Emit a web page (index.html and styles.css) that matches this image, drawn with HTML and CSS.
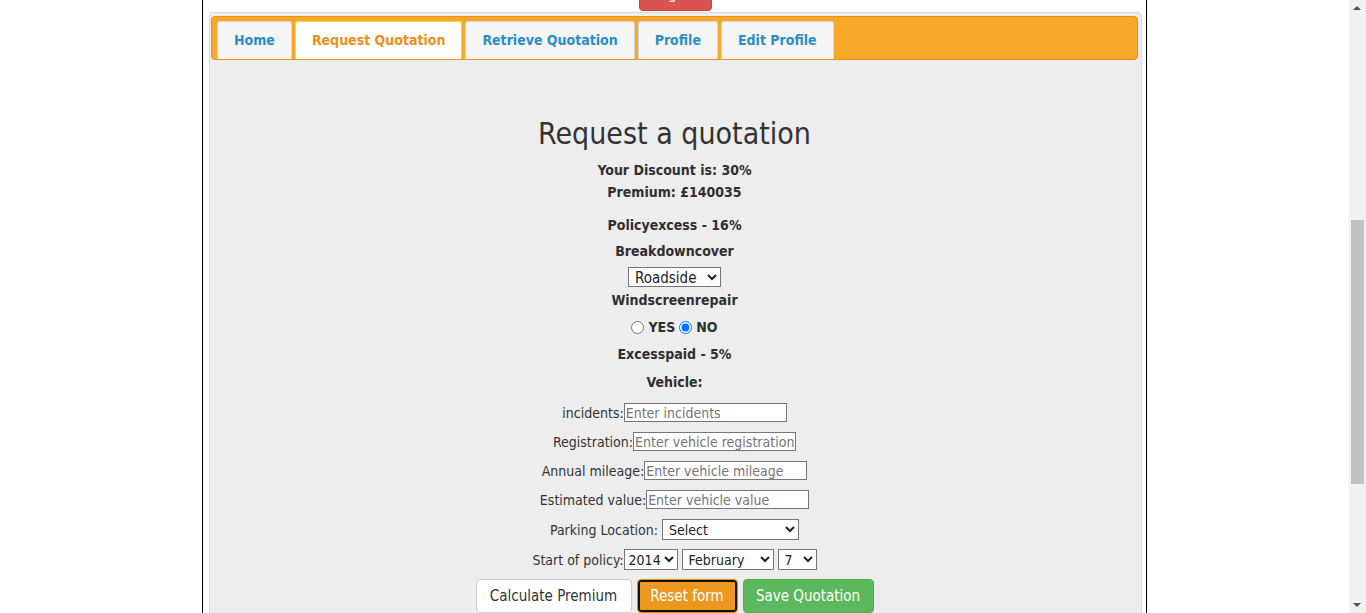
FILE: index.html
```html
<!DOCTYPE html>
<html lang="en">
<head>
<meta charset="utf-8">
<title>Request a quotation</title>
<link rel="stylesheet" href="styles.css">
</head>
<body>
<div class="page">
  <header class="top">
    <h2 class="site-title">Insurance Broker</h2>
    <p class="welcome">Welcome back</p>
  </header>
  <div class="logout-wrap">
    <a class="btn btn-danger logout" href="#">Logout</a>
  </div>
  <div class="panel">
    <ul class="tabs">
      <li class="tab"><a href="#">Home</a></li>
      <li class="tab active"><a href="#">Request Quotation</a></li>
      <li class="tab"><a href="#">Retrieve Quotation</a></li>
      <li class="tab"><a href="#">Profile</a></li>
      <li class="tab"><a href="#">Edit Profile</a></li>
    </ul>
    <section class="quote">
      <h1 class="title">Request a quotation</h1>
      <p class="line l-discount">Your Discount is: 30%</p>
      <p class="line l-premium">Premium: £140035</p>
      <p class="line l-policy">Policyexcess - 16%</p>
      <p class="line l-breakdown">Breakdowncover</p>
      <div class="sel-row">
        <select class="sel sel-breakdown"><option>Roadside</option><option>At home</option><option>European</option></select>
      </div>
      <p class="line l-wind">Windscreenrepair</p>
      <div class="radio-row line">
        <label><input type="radio" name="ws"> YES</label>
        <label><input type="radio" name="ws" checked> NO</label>
      </div>
      <p class="line l-excess">Excesspaid - 5%</p>
      <p class="line l-vehicle">Vehicle:</p>
      <div class="row first"><label>incidents:</label><input class="txt" type="text" placeholder="Enter incidents"></div>
      <div class="row"><label>Registration:</label><input class="txt" type="text" placeholder="Enter vehicle registration"></div>
      <div class="row"><label>Annual mileage:</label><input class="txt" type="text" placeholder="Enter vehicle mileage"></div>
      <div class="row"><label>Estimated value:</label><input class="txt" type="text" placeholder="Enter vehicle value"></div>
      <div class="row row-sel"><label>Parking Location:&nbsp;</label><select class="sel sel-park"><option>Select</option><option>Garage</option><option>Driveway</option><option>Street</option></select></div>
      <div class="row row-sel start"><label>Start of policy:</label>
        <select class="sel sel-year"><option>2014</option></select>
        <select class="sel sel-month"><option>February</option></select>
        <select class="sel sel-day"><option>7</option></select>
      </div>
      <div class="buttons">
        <button class="btn btn-default" type="button">Calculate Premium</button>
        <button class="btn btn-warning focused" type="reset">Reset form</button>
        <button class="btn btn-success" type="button">Save Quotation</button>
      </div>
    </section>
  </div>
</div>
<div class="fake-scroll" aria-hidden="true">
  <span class="arrow up"></span>
  <span class="thumb"></span>
  <span class="arrow down"></span>
</div>
<script src="script.js"></script>
</body>
</html>
```

FILE: styles.css
```css
html, body {
  margin: 0;
  padding: 0;
}
body {
  margin-right: 17px;
  font-family: "DejaVu Sans Condensed", "DejaVu Sans", sans-serif;
  color: #333;
  background: #fff;
}
.page {
  box-sizing: border-box;
  width: 945px;
  margin: 0 auto;
  border-left: 1px solid #000;
  border-right: 1px solid #000;
  padding: 0 4px 20px 6px;
}
.top {
  height: 448px;
  display: flex;
  flex-direction: column;
  align-items: center;
  justify-content: center;
}
.site-title {
  margin: 0;
  font-size: 28px;
  font-weight: normal;
}
.welcome {
  margin: 8px 0 0;
  font-size: 15px;
}
.logout-wrap {
  display: flex;
  justify-content: center;
}
.btn {
  box-sizing: border-box;
  display: inline-flex;
  align-items: center;
  justify-content: center;
  height: 34px;
  padding: 0 12px;
  border: 1px solid transparent;
  border-radius: 4px;
  font-family: inherit;
  font-size: 15px;
  text-decoration: none;
  cursor: pointer;
}
.btn-danger {
  background: #d9534f;
  border-color: #d43f3a;
  color: #fff;
}
.logout {
  width: 73px;
}
.panel {
  margin-top: 1px;
  border: 1px solid #dadada;
  border-radius: 4px;
  background: #ededed;
  padding: 3px 3px 240px 1px;
}
.tabs {
  list-style: none;
  margin: 0;
  padding: 4px 5px 0;
  display: flex;
  gap: 3px;
  background: #f6a82b;
  border: 1px solid #e8910e;
  border-radius: 4px;
}
.tab {
  border: 1px solid #d6d6d6;
  border-bottom: 0;
  border-radius: 3px 3px 0 0;
  background: #f5f5f5;
}
.tab a {
  display: block;
  padding: 0 16px;
  line-height: 37px;
  font-size: 14px;
  font-weight: bold;
  color: #2a8ec4;
  text-decoration: none;
}
.tab.active {
  background: #fff;
  border-color: #f8cf52;
}
.tab.active a {
  color: #eb8f1a;
}
.quote {
  display: flex;
  flex-direction: column;
  align-items: center;
  text-align: center;
}
.title {
  margin: 56px 0 8px;
  font-size: 30px;
  line-height: 36px;
  font-weight: normal;
  color: #333;
}
.line {
  margin: 0;
  font-size: 14px;
  line-height: 21px;
  font-weight: bold;
  color: #2f2f2f;
}
.l-premium { margin-top: 1px; }
.l-policy { margin-top: 12px; }
.l-breakdown { margin-top: 5px; }
.sel-row {
  margin-top: 5px;
  display: flex;
}
.l-wind { margin-top: 3px; }
.sel {
  box-sizing: border-box;
  height: 21px;
  border: 1px solid #767676;
  border-radius: 0;
  background: #fff;
  color: #222;
  font-family: inherit;
  font-size: 14px;
  padding: 0 2px;
}
.sel-breakdown {
  width: 93px;
  height: 20px;
  font-size: 15px;
}
.radio-row {
  margin-top: 6px;
  display: flex;
  align-items: center;
  gap: 4px;
}
.radio-row label {
  display: flex;
  align-items: center;
  gap: 4px;
}
.radio-row input {
  margin: 0;
  width: 13px;
  height: 13px;
}
.l-excess { margin-top: 6px; }
.l-vehicle { margin-top: 7px; }
.row {
  margin-top: 10px;
  display: flex;
  align-items: center;
  font-size: 14px;
  color: #333;
}
.row-sel.start { margin-top: 9px; }
.txt {
  box-sizing: border-box;
  width: 163px;
  height: 19px;
  border: 1px solid #767676;
  padding: 0 1px;
  font-family: inherit;
  font-size: 14px;
  color: #222;
  background: #fff;
}
.txt::placeholder {
  color: #757575;
}
.sel-park { width: 137px; }
.start { gap: 4px; }
.start label { margin-right: -4px; }
.sel-year { width: 54px; padding: 0; }
.sel-month { width: 92px; }
.sel-day { width: 39px; }
.buttons {
  margin-top: 9px;
  display: flex;
  gap: 5px;
}
.btn-default {
  background: #fff;
  border-color: #ccc;
  color: #333;
  width: 156px;
}
.btn-warning {
  background: #ec971f;
  border-color: #d58512;
  color: #fff;
  width: 101px;
}
.btn-warning.focused {
  border-color: #e08e0b;
  box-shadow: inset 0 0 0 2px #111;
}
.btn-success {
  background: #5cb85c;
  border-color: #4cae4c;
  color: #fff;
  width: 131px;
}
.fake-scroll {
  position: fixed;
  top: 0;
  right: 0;
  width: 17px;
  height: 100%;
  background: #f1f1f1;
}
.fake-scroll .thumb {
  position: absolute;
  left: 2px;
  top: 220px;
  width: 13px;
  height: 264px;
  background: #c1c1c1;
}
.fake-scroll .arrow {
  position: absolute;
  left: 4px;
  width: 0;
  height: 0;
  border-left: 4px solid transparent;
  border-right: 4px solid transparent;
}
.fake-scroll .arrow.up {
  top: 6px;
  border-bottom: 4px solid #505050;
}
.fake-scroll .arrow.down {
  bottom: 6px;
  border-top: 4px solid #505050;
}
```

FILE: script.js
```js
function placeView() {
  var b = document.querySelector('.logout');
  var r = b.getBoundingClientRect();
  window.scrollTo(0, r.bottom + window.scrollY - 11);
}
placeView();
window.addEventListener('load', placeView);
```
